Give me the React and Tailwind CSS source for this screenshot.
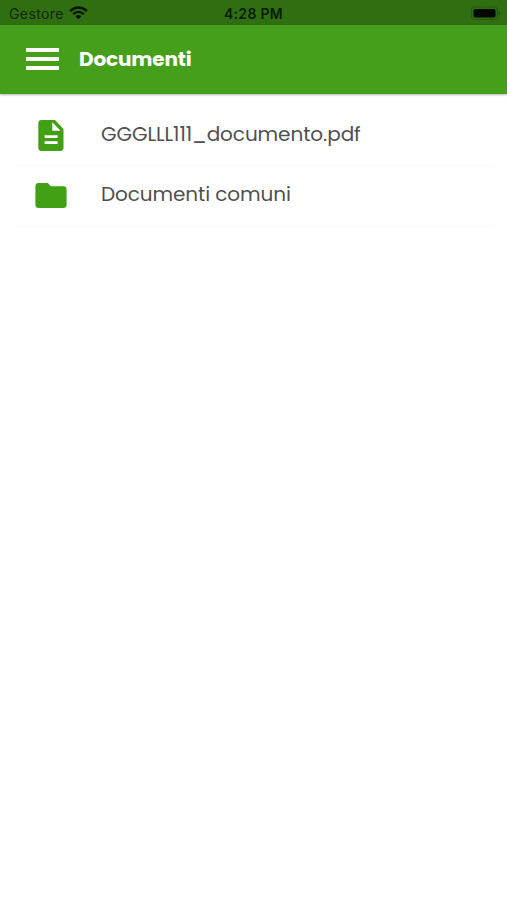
function WifiIcon() {
  return (
    <svg className="ml-[5px] h-[14px] w-[19px]" viewBox="0 0 19 14" fill="none">
      <path d="M1.2 5.1C6 .3 13 .3 17.8 5.1" stroke="#081403" strokeWidth="2.4" />
      <path d="M4.2 8.1c3-3 7.6-3 10.6 0" stroke="#081403" strokeWidth="2.2" />
      <path d="M6.5 10.2c1.8-1.7 4.2-1.7 6 0L9.5 13.2z" fill="#081403" />
    </svg>
  );
}

function BatteryIcon() {
  return (
    <svg className="mt-px h-[15px] w-[31px]" viewBox="0 0 31 15" fill="none">
      <rect x="1.500" y="1" width="26" height="12.500" rx="3.500" stroke="#265a0e" strokeWidth="1.200" />
      <rect x="3.500" y="3" width="22" height="8.500" rx="1.800" fill="#030801" />
      <path d="M28.8 5c1.6.6 1.6 4 0 4.600z" fill="#22520d" />
    </svg>
  );
}

function DocumentIcon() {
  return (
    <svg className="h-[31px] w-[26px]" viewBox="0 0 26 31">
      <path
        fill="#42a014"
        fillRule="evenodd"
        d="M3.2 0H17L25.5 9v18.8c0 1.8-1.2 3.2-3 3.2H3.2C1.4 31 .3 29.6.3 27.8V3.2C.3 1.4 1.4 0 3.2 0zM14.3 2.2v8.6h8.3zM6.6 15.2v2.7h13v-2.7zm0 6.1V24h13v-2.7z"
      />
    </svg>
  );
}

function FolderIcon() {
  return (
    <svg className="mb-[2px] h-[25px] w-[32px]" viewBox="0 0 32 25">
      <path
        fill="#42a014"
        d="M3.500 0h9.300l3.100 3.200h12.600c1.800 0 3.100 1.300 3.100 3V22c0 1.800-1.300 3-3.100 3h-25C1.700 25 .4 23.800.4 22V3C.4 1.200 1.700 0 3.500 0z"
      />
    </svg>
  );
}

function Row({ icon, children }) {
  return (
    <li className="ml-4 mr-3 flex h-[61px] items-center border-b border-[#fafafa]">
      <span className="flex w-[70px] justify-center">{icon}</span>
      {children}
    </li>
  );
}

export default function App() {
  return (
    <div className="h-[900px] w-full bg-white font-['Poppins','Inter',sans-serif]">
      <div className="grid h-[25px] grid-cols-3 items-center bg-[#306e12] font-['Inter',sans-serif]">
        <div className="flex items-center pl-[9px]">
          <span className="pt-px text-[14px] leading-[25px] tracking-[0.4px] text-[#102706]">Gestore</span>
          <WifiIcon />
        </div>
        <span className="pt-px text-center text-[14px] leading-[25px] font-semibold tracking-[0.3px] text-[#0b1c04]">4:28 PM</span>
        <div className="flex justify-end pr-[6px]">
          <BatteryIcon />
        </div>
      </div>
      <header className="flex h-[69px] items-center bg-[#469f1a] pb-px pl-[26px] shadow-[0_1px_2px_rgba(0,0,0,0.3)]">
        <div className="flex w-[33px] flex-col gap-[5px]">
          <span className="h-1 bg-white" />
          <span className="h-1 bg-white" />
          <span className="h-1 bg-white" />
        </div>
        <h1 className="ml-5 pb-px text-[20px] font-bold leading-6 tracking-[-0.15px] text-white">Documenti</h1>
      </header>
      <ul className="pt-[11px]">
        <Row icon={<DocumentIcon />}>
          <span className="ml-[15px] pb-[2px] text-[20px] tracking-[-0.08px] text-[#505050]">GGGLLL111_documento.pdf</span>
        </Row>
        <Row icon={<FolderIcon />}>
          <span className="ml-[15px] pb-[5px] text-[20px] tracking-[-0.09px] text-[#505050]">Documenti comuni</span>
        </Row>
      </ul>
    </div>
  );
}
